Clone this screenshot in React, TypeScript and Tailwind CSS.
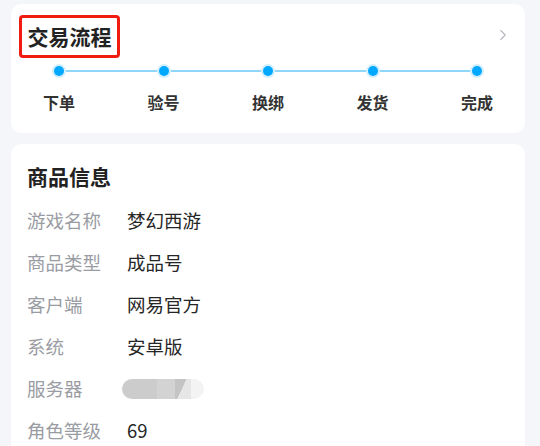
import React from 'react';
import { ChevronRight } from 'lucide-react';

const steps = ['下单', '验号', '换绑', '发货', '完成'];

const rows: { label: string; value: string | null }[] = [
    { label: '游戏名称', value: '梦幻西游' },
    { label: '商品类型', value: '成品号' },
    { label: '客户端', value: '网易官方' },
    { label: '系统', value: '安卓版' },
    { label: '服务器', value: null },
    { label: '角色等级', value: '69' },
];

// 服务器名称被打码了
const Blurred = () => (
    <div className="flex h-[20px] w-[82px] overflow-hidden rounded-full ml-[-5px]">
        <div className="w-[35px] bg-[#cccccc]"></div>
        <div className="w-[18px] bg-[#d3d3d3]"></div>
        <div className="w-[16px] bg-[linear-gradient(115deg,#c4c4c4_45%,#e6e6e6_46%)]"></div>
        <div className="flex-1 bg-[#f3f3f3]"></div>
    </div>
);

export default function App() {
    return (
        <div className="w-[540px] h-[446px] overflow-hidden bg-[#f5f6fa] pl-[11px] pt-[4px] font-['Noto_Sans_CJK_SC',sans-serif]">
            <div className="bg-white rounded-[10px] w-[514px] h-[129px]">
                <div className="flex items-center justify-between pl-[8px] pr-[13px] pt-[11px]">
                    <div className="border-[3px] border-[#f01c10] rounded-[4px] w-[101px] h-[43px] flex items-center justify-center">
                        <span className="text-[21px] font-bold text-[#222] leading-none">交易流程</span>
                    </div>
                    <ChevronRight size={18} strokeWidth={1.5} className="text-[#b8b8c0] mt-[-4px]" />
                </div>
                <div className="relative mx-[41px] mt-[6px] h-[14px]">
                    <div className="absolute left-0 right-0 top-[6px] h-[2px] bg-[#8fd6fb]"></div>
                    <div className="relative flex justify-between">
                        {steps.map(s => (
                            <div key={s} className="w-[14px] h-[14px] rounded-full bg-[#d4effe] flex items-center justify-center">
                                <div className="w-[10px] h-[10px] rounded-full bg-[#00a8ff]"></div>
                            </div>
                        ))}
                    </div>
                </div>
                <div className="flex justify-between mx-[26px] mt-[14px]">
                    {steps.map(s => (
                        <div key={s} className="w-[44px] text-center text-[16px] font-bold text-[#333] leading-[20px]">{s}</div>
                    ))}
                </div>
            </div>
            <div className="bg-white rounded-[10px] mt-[11px] w-[514px] h-[320px] px-[16px] pt-[18px]">
                <div className="text-[21px] font-bold text-[#222] leading-[28px]">商品信息</div>
                <div className="mt-[10px]">
                    {rows.map(r => (
                        <div key={r.label} className="flex items-center h-[42px]">
                            <div className="w-[100px] text-[18.5px] text-[#9a9ca3]">{r.label}</div>
                            {r.value ? <div className="text-[18.5px] text-[#262626]">{r.value}</div> : <Blurred />}
                        </div>
                    ))}
                </div>
            </div>
        </div>
    );
}
